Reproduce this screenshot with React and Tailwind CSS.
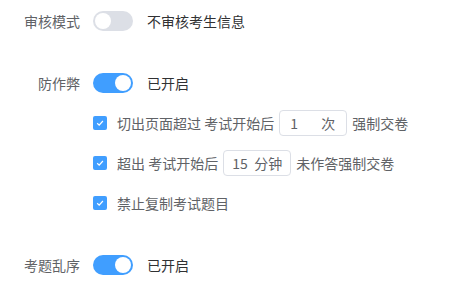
import { useState } from 'react';

const font = { fontFamily: '"Microsoft YaHei", "Noto Sans CJK SC", "Noto Sans", sans-serif' };

function Switch({ on, onToggle }) {
  return (
    <button
      onClick={onToggle}
      className={
        'relative w-10 h-5 rounded-full shrink-0 transition-colors ' +
        (on ? 'bg-[#409eff]' : 'bg-[#dcdfe6]')
      }
    >
      <span
        className={
          'absolute top-[2px] w-4 h-4 rounded-full bg-white transition-all ' +
          (on ? 'left-[22px]' : 'left-[2px]')
        }
      />
    </button>
  );
}

function Check({ children }) {
  return (
    <div className="h-10 flex items-center text-sm text-[#606266]">
      <span className="w-[14px] h-[14px] rounded-[2px] bg-[#409eff] flex items-center justify-center shrink-0">
        <svg width="10" height="10" viewBox="0 0 10 10" fill="none">
          <path d="M2.2 5.2 4.2 7.1 7.9 3" stroke="white" strokeWidth="1.2" />
        </svg>
      </span>
      <div className="ml-[10px] flex items-center">{children}</div>
    </div>
  );
}

function Row({ label, children }) {
  return (
    <div className="flex">
      <div className="w-[93px] pr-[13px] h-10 flex items-center justify-end text-sm text-[#606266] shrink-0">
        {label}
      </div>
      <div className="flex-1">{children}</div>
    </div>
  );
}

export default function App() {
  const [audit, setAudit] = useState(false);
  const [cheat, setCheat] = useState(true);
  const [shuffle, setShuffle] = useState(true);

  return (
    <div className="w-[450px] h-[300px] bg-white pt-[1px]" style={font}>
      <div className="mb-[22px]">
        <Row label="审核模式">
          <div className="h-10 flex items-center gap-[14px]">
            <Switch on={audit} onToggle={() => setAudit(!audit)} />
            <span className="text-sm text-[#303133]">{audit ? '审核考生信息' : '不审核考生信息'}</span>
          </div>
        </Row>
      </div>

      <div className="mb-[22px]">
        <Row label="防作弊">
          <div className="h-10 flex items-center gap-[14px]">
            <Switch on={cheat} onToggle={() => setCheat(!cheat)} />
            <span className="text-sm text-[#303133]">已开启</span>
          </div>
          <Check>
            <span>切出页面超过 考试开始后</span>
            <div className="ml-[5px] mr-[5px] w-[68px] h-[26px] border border-[#dcdfe6] rounded flex items-center justify-between pl-[10px] pr-[11px]">
              <span>1</span>
              <span>次</span>
            </div>
            <span>强制交卷</span>
          </Check>
          <Check>
            <span>超出 考试开始后</span>
            <div className="ml-[5px] mr-[5px] w-[68px] h-[26px] border border-[#dcdfe6] rounded flex items-center justify-between px-[8px]">
              <span>15</span>
              <span>分钟</span>
            </div>
            <span>未作答强制交卷</span>
          </Check>
          <Check>
            <span>禁止复制考试题目</span>
          </Check>
        </Row>
      </div>

      <Row label="考题乱序">
        <div className="h-10 flex items-center gap-[14px]">
          <Switch on={shuffle} onToggle={() => setShuffle(!shuffle)} />
          <span className="text-sm text-[#303133]">已开启</span>
        </div>
      </Row>
    </div>
  );
}
